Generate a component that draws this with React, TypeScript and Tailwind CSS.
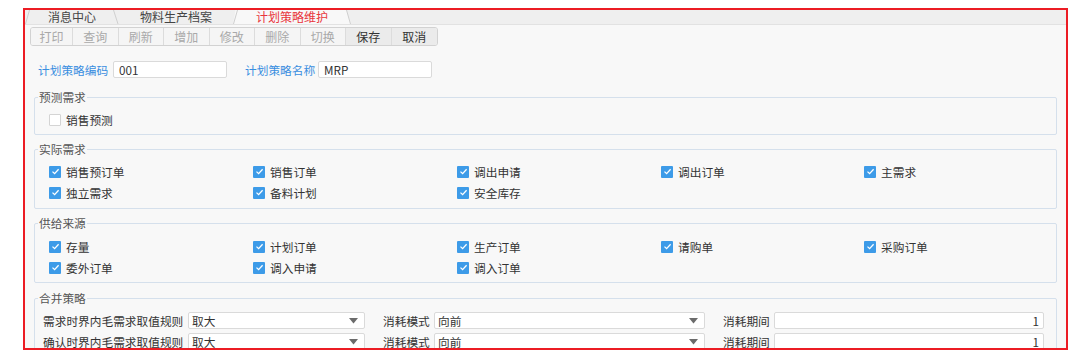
import React from 'react';

const font = { fontFamily: '"Noto Sans CJK SC", "Noto Sans", sans-serif' };

const tools = [
  { label: '打印', on: false },
  { label: '查询', on: false },
  { label: '刷新', on: false },
  { label: '增加', on: false },
  { label: '修改', on: false },
  { label: '删除', on: false },
  { label: '切换', on: false },
  { label: '保存', on: true },
  { label: '取消', on: true },
];

const Check = ({ checked, label }: { checked: boolean; label: string }) => (
  <div className="flex items-center h-[21px] gap-[5px]">
    {checked ? (
      <span className="w-[12px] h-[12px] rounded-[1px] bg-[#3d9be8] flex items-center justify-center">
        <svg width="9" height="9" viewBox="0 0 9 9">
          <path d="M1.5 4.6 L3.6 6.6 L7.6 2.2" fill="none" stroke="#fff" strokeWidth="1.3" />
        </svg>
      </span>
    ) : (
      <span className="w-[12px] h-[12px] rounded-[1px] bg-white border border-[#d4d4d4]" />
    )}
    <span className="text-[11.7px] text-[#333] leading-none">{label}</span>
  </div>
);

// bordered group box, legend sits on the top border
const Group = ({
  title,
  className,
  children,
}: {
  title: string;
  className: string;
  children: React.ReactNode;
}) => (
  <div className={`relative flex-none mx-[9px] border border-[#d5e0ec] rounded-[2px] ${className}`}>
    <span className="absolute left-[3px] top-[-8px] px-[1px] bg-[#f8f8f8] text-[11.7px] leading-[14px] text-[#555]">
      {title}
    </span>
    {children}
  </div>
);

const Grid = ({ items }: { items: string[] }) => (
  <div className="grid grid-cols-[204px_204px_204px_203px_1fr] pl-[14px]">
    {items.map((t) => (
      <Check key={t} checked label={t} />
    ))}
  </div>
);

const Select = ({ value, w }: { value: string; w: string }) => (
  <div className={`${w} h-[17px] bg-white border border-[#dadada] rounded-[2px] flex items-center justify-between pl-[3px] pr-[6px]`}>
    <span className="text-[11.7px] text-[#333] leading-none">{value}</span>
    <svg width="9" height="6" viewBox="0 0 9 6">
      <path d="M0 0 H9 L4.5 5.5 Z" fill="#6b6b6b" />
    </svg>
  </div>
);

const MergeRow = ({ label }: { label: string }) => (
  <div className="flex items-center h-[21px]">
    <span className="w-[145px] text-[11.7px] text-[#333] leading-none">{label}</span>
    <Select value="取大" w="w-[177px]" />
    <span className="ml-[18px] w-[51px] text-[11.7px] text-[#333] leading-none">消耗模式</span>
    <Select value="向前" w="w-[271px]" />
    <span className="ml-[18px] w-[51px] text-[11.7px] text-[#333] leading-none">消耗期间</span>
    <div className="w-[270px] h-[17px] bg-white border border-[#dadada] rounded-[2px] flex items-center justify-end pr-[4px]">
      <span className="text-[11.7px] text-[#333] leading-none">1</span>
    </div>
  </div>
);

export default function App() {
  return (
    <div className="w-[1080px] h-[358px] bg-white pt-[8px] pl-[23px]" style={font}>
      <div className="w-[1045px] h-[342px] border-2 border-[#ec1c24] overflow-hidden bg-[#f8f8f8] flex flex-col">
        {/* tab strip */}
        <div className="h-[15px] flex-none flex items-stretch bg-[#efefef] border-b border-[#e2e2e2] text-[12px] leading-none">
          <svg width="6" height="14" viewBox="0 0 6 14" className="flex-none">
            <path d="M0.5 14 L4.5 0" stroke="#cfcfcf" fill="none" />
          </svg>
          <div className="w-[82px] flex items-center justify-center text-[#444]">消息中心</div>
          <svg width="6" height="14" viewBox="0 0 6 14" className="flex-none">
            <path d="M0.5 0 L5 14" stroke="#cfcfcf" fill="none" />
          </svg>
          <div className="w-[114px] flex items-center justify-center text-[#444]">物料生产档案</div>
          <svg width="7" height="14" viewBox="0 0 7 14" className="flex-none">
            <path d="M7 0 L2.5 0 L0 14 L7 14 Z" fill="#f8f8f8" />
            <path d="M0.5 14 L4.5 0" stroke="#cfcfcf" fill="none" />
          </svg>
          <div className="w-[104px] flex items-center justify-center text-[#e8363c] bg-[#f8f8f8]">计划策略维护</div>
          <svg width="7" height="14" viewBox="0 0 7 14" className="flex-none">
            <path d="M0 0 L2.5 0 L7 14 L0 14 Z" fill="#f8f8f8" />
            <path d="M2.5 0 L6.5 14" stroke="#cfcfcf" fill="none" />
          </svg>
        </div>

        {/* toolbar */}
        <div className="mt-[2px] ml-[5px] flex flex-none">
          <div className="flex h-[19px] border border-[#d2d2d2] rounded-[3px] overflow-hidden">
            {tools.map((t, i) => (
              <div
                key={t.label}
                className={`${i === 0 ? 'w-[42px]' : 'w-[45.5px]'} ${i < tools.length - 1 ? 'border-r border-[#dcdcdc]' : ''} ${t.on ? 'bg-[#ebebeb] text-[#333]' : 'bg-[#f5f5f5] text-[#a9a9a9]'} flex items-center justify-center text-[12px] leading-none`}
              >
                {t.label}
              </div>
            ))}
          </div>
        </div>

        {/* code / name */}
        <div className="mt-[15px] pl-[13px] flex flex-none items-center h-[17px]">
          <span className="text-[11.7px] text-[#3a8ee0] leading-none w-[75px]">计划策略编码</span>
          <div className="w-[114px] h-[17px] bg-white border border-[#dadada] rounded-[2px] flex items-center pl-[5px]">
            <span className="text-[11.7px] text-[#333] leading-none">001</span>
          </div>
          <span className="ml-[18px] text-[11.7px] text-[#3a8ee0] leading-none w-[73px]">计划策略名称</span>
          <div className="w-[114px] h-[17px] bg-white border border-[#dadada] rounded-[2px] flex items-center pl-[5px]">
            <span className="text-[11.7px] text-[#333] leading-none">MRP</span>
          </div>
        </div>

        <Group title="预测需求" className="mt-[19px] h-[38px]">
          <div className="pl-[14px] pt-[11px]">
            <Check checked={false} label="销售预测" />
          </div>
        </Group>

        <Group title="实际需求" className="mt-[14px] h-[60px]">
          <div className="pt-[11px]">
            <Grid items={['销售预订单', '销售订单', '调出申请', '调出订单', '主需求', '独立需求', '备料计划', '安全库存']} />
          </div>
        </Group>

        <Group title="供给来源" className="mt-[14px] h-[60px]">
          <div className="pt-[12px]">
            <Grid items={['存量', '计划订单', '生产订单', '请购单', '采购订单', '委外订单', '调入申请', '调入订单']} />
          </div>
        </Group>

        <Group title="合并策略" className="mt-[15px] h-[60px]">
          <div className="pl-[8px] pt-[11px]">
            <MergeRow label="需求时界内毛需求取值规则" />
            <MergeRow label="确认时界内毛需求取值规则" />
          </div>
        </Group>
      </div>
    </div>
  );
}
